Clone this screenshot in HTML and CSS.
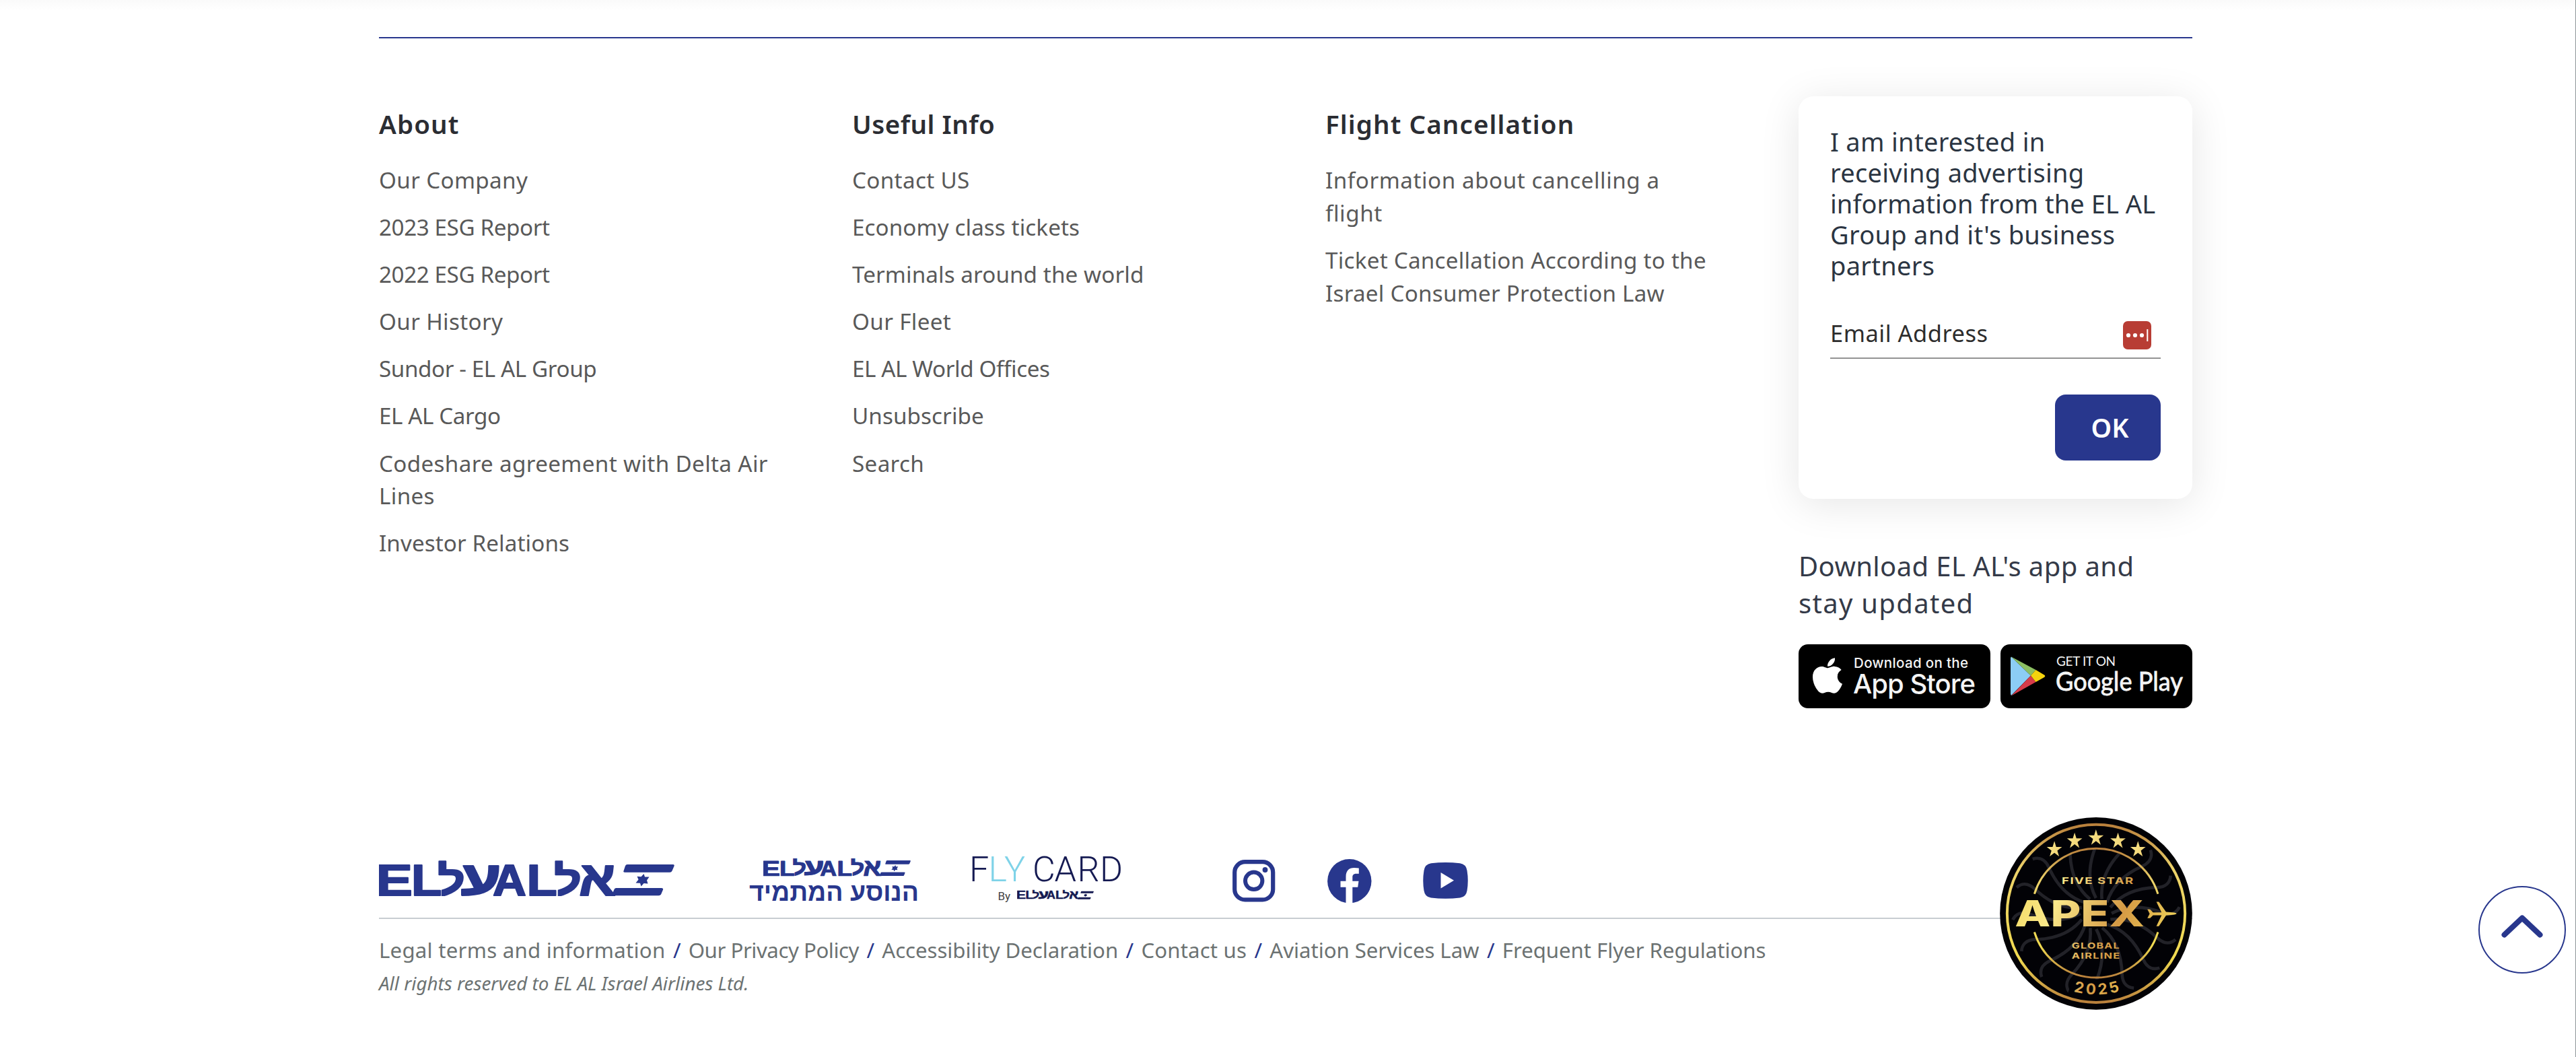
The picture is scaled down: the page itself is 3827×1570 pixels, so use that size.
FILE: index.html
```html
<!DOCTYPE html>
<html lang="en">
<head>
<meta charset="utf-8">
<title>EL AL</title>
<link rel="stylesheet" href="styles.css">
</head>
<body>
<svg class="defs" aria-hidden="true">
  <symbol id="elal" viewBox="0 0 439 53">
    <g class="wordmark">
      <text transform="matrix(.825 0 0 .645 -5 51.5)">E</text>
      <text transform="matrix(.74 0 0 .645 48 51.5)">L</text>
      <text transform="matrix(.72 0 0 .615 87 50.5)">ל</text>
      <text transform="matrix(.98 0 0 .7 121.5 49.5)">ע</text>
      <text transform="matrix(.69 0 0 .64 169 51.5)">A</text>
      <text transform="matrix(.74 0 0 .645 219.5 51.5)">L</text>
      <text transform="matrix(.72 0 0 .615 260 50.5)">ל</text>
      <text transform="matrix(.8 0 0 .73 297 51.5)">א</text>
    </g>
    <path d="M369 6H436.500Q439.500 6 438.500 8.500L435.500 15.500Q434.500 17.700 432 17.700H365.500Q362.500 17.700 363.500 15.500L366 8Q366.800 6 369 6Z"/>
    <path d="M352.500 41H419.500Q422.800 41 422 43.500L419 50.500Q418 52.300 415.500 52.300H348.500Q346 52.300 346.800 49.500L349.500 43Q350.300 41 352.500 41Z"/>
    <path d="M393.500 20L395 24.500L401.500 24.500L398 29.500L399.500 34.500L393.500 34L389.500 38.500L388 33.800L381.500 33.500L385.500 28.500L383.500 23.800L389.500 24.300Z"/>
  </symbol>
</svg>

<footer class="footer">
  <div class="top">
    <nav class="col">
      <h2>About</h2>
      <ul>
        <li><a>Our Company</a></li>
        <li><a class="snug">2023 ESG Report</a></li>
        <li><a class="snug">2022 ESG Report</a></li>
        <li><a>Our History</a></li>
        <li><a class="snug">Sundor - EL AL Group</a></li>
        <li><a class="snug">EL AL Cargo</a></li>
        <li><a>Codeshare agreement with Delta Air<br>Lines</a></li>
        <li><a class="even">Investor Relations</a></li>
      </ul>
    </nav>
    <nav class="col">
      <h2 class="tight">Useful Info</h2>
      <ul>
        <li><a>Contact US</a></li>
        <li><a class="even">Economy class tickets</a></li>
        <li><a class="even">Terminals around the world</a></li>
        <li><a>Our Fleet</a></li>
        <li><a class="snug">EL AL World Offices</a></li>
        <li><a class="even">Unsubscribe</a></li>
        <li><a>Search</a></li>
      </ul>
    </nav>
    <nav class="col">
      <h2>Flight Cancellation</h2>
      <ul>
        <li><a class="wide">Information about cancelling a<br>flight</a></li>
        <li><a class="mid">Ticket Cancellation According to the<br>Israel Consumer Protection Law</a></li>
      </ul>
    </nav>
    <aside class="side">
      <div class="card">
        <p>I am interested in<br>receiving advertising<br><span class="snug">information from the EL AL</span><br>Group and it's business<br>partners</p>
        <div class="field">
          <span>Email Address</span>
          <svg width="42" height="42" viewBox="0 0 42 42"><rect width="42" height="42" rx="7" fill="#b83d34"/><g fill="#fff"><circle cx="8" cy="21" r="3.100"/><circle cx="18" cy="21" r="3.100"/><circle cx="28" cy="21" r="3.100"/><rect x="35.300" y="12" width="2" height="18"/></g></svg>
        </div>
        <button>OK</button>
      </div>
      <p class="app">Download EL AL's app and<br><span class="wide">stay updated</span></p>
      <div class="stores">
        <svg width="285" height="95" viewBox="0 0 285 95">
          <rect width="285" height="95" rx="14"/>
          <path fill="#fff" transform="translate(20.500 16.600) scale(.117)" d="M318.700 268.700c-.2-36.700 16.400-64.400 50-84.800-18.800-26.900-47.200-41.700-84.700-44.600-35.500-2.800-74.300 20.700-88.500 20.700-15 0-49.400-19.700-76.400-19.700C63.300 141.200 4 184.800 4 273.500q0 39.300 14.400 81.200c12.800 36.700 59 126.700 107.200 125.200 25.200-.6 43-17.900 75.800-17.900 31.800 0 48.300 17.900 76.400 17.900 48.600-.7 90.400-82.500 102.600-119.300-65.200-30.700-61.700-90-61.700-91.900zm-56.600-164.200c27.300-32.400 24.800-61.900 24-72.500-24.100 1.400-52 16.400-67.900 34.900-17.500 19.800-27.800 44.300-25.600 71.900 26.100 2 49.900-11.400 69.500-34.300z"/>
          <text class="st-small" x="82" y="35" textLength="170">Download on the</text>
          <text class="st-big" x="81" y="72.500" textLength="182">App Store</text>
        </svg>
        <svg width="285" height="95" viewBox="0 0 285 95">
          <rect width="285" height="95" rx="14"/>
          <path fill="#8ccdf5" d="M15 20L16 18.500L45 46.500L16 76L15 74Z"/>
          <path fill="#8cbf62" d="M16 18.500L52.500 38L45 46.500Z"/>
          <path fill="#d63c4a" d="M16 76.500L45 46.500L52.500 56Z"/>
          <path fill="#f5d30d" d="M52.500 38L65 45.500Q67.500 47 65 49L52.500 56L45 46.500Z"/>
          <text class="gp-small" x="83" y="32" textLength="88">GET IT ON</text>
          <text class="gp-big" x="82" y="69" textLength="189" lengthAdjust="spacingAndGlyphs">Google Play</text>
        </svg>
      </div>
    </aside>
  </div>

  <div class="bottom">
    <div class="brands">
      <svg class="logo-main" width="439" height="53"><use href="#elal"/></svg>
      <svg class="logo-club" width="254" height="72" viewBox="0 0 254 72">
        <use href="#elal" x="21" y="0" width="219" height="26.500"/>
        <text x="0" y="63" textLength="252" lengthAdjust="spacingAndGlyphs">הנוסע המתמיד</text>
      </svg>
      <svg class="logo-fly" width="221" height="72" viewBox="0 0 221 72">
        <text class="fly" x="-4 24.500 48 90 122.500 156.500 190" y="37">F<tspan fill="#7fd3e8">LY</tspan>CARD</text>
        <text class="by" x="38.500" y="64.500">By</text>
        <use href="#elal" x="67" y="49" width="114" height="16"/>
      </svg>
      <svg class="social ig" width="64" height="63" viewBox="0 0 64 63">
        <rect x="3.200" y="3.200" width="57" height="56.200" rx="15.500" fill="none" stroke="currentColor" stroke-width="6.200"/>
        <circle cx="31.700" cy="31.300" r="12.700" fill="none" stroke="currentColor" stroke-width="6"/>
        <circle cx="48.500" cy="15" r="3.900" fill="currentColor"/>
      </svg>
      <svg class="social fb" width="66" height="65" viewBox="0 0 66 65">
        <circle cx="32.800" cy="32.700" r="32.700" fill="currentColor"/>
        <path fill="#fff" d="M27.500 66V41.700H19.500V32.700H27.500V26C27.500 17.500 32 13 39.800 13C42.500 13 44.800 13.200 46.800 13.600V21.700H42.800C38.800 21.700 37.300 23.900 37.300 26.700V32.700H46.500L45.200 41.700H37.300V66Z"/>
      </svg>
      <svg class="social yt" width="67" height="54" viewBox="0 0 67 54">
        <path fill="currentColor" d="M12 1.200Q33.500-1 55 1.200Q64 2.500 65.500 12Q68 27 65.500 42Q64 51.500 55 52.500Q33.500 55 12 52.500Q3 51.500 1.500 42Q-1 27 1.500 12Q3 2.500 12 1.200Z"/>
        <path fill="#fff" d="M26.500 15L46 26.800L26.500 38.500Z"/>
      </svg>
    </div>
    <div class="legal">
      <a class="wide">Legal terms and information</a><i>/</i><a class="snug">Our Privacy Policy</a><i>/</i><a class="even">Accessibility Declaration</a><i>/</i><a>Contact us</a><i>/</i><a class="even">Aviation Services Law</a><i>/</i><a class="even">Frequent Flyer Regulations</a>
    </div>
    <p class="copy">All rights reserved to EL AL Israel Airlines Ltd.</p>

    <svg class="apex" width="286" height="286" viewBox="95 71 857 857">
      <defs>
        <linearGradient id="gold" gradientUnits="userSpaceOnUse" x1="140" y1="300" x2="900" y2="620">
          <stop offset="0" stop-color="#f0d558"/><stop offset=".3" stop-color="#fbe98a"/><stop offset=".65" stop-color="#d59a45"/><stop offset="1" stop-color="#f3dc5c"/>
        </linearGradient>
        <linearGradient id="ring" x1="0" y1="0" x2="0" y2="1">
          <stop offset="0" stop-color="#b9803c"/><stop offset=".25" stop-color="#ecd26a"/><stop offset=".75" stop-color="#f0da50"/><stop offset="1" stop-color="#b9803c"/>
        </linearGradient>
        <path id="ray" d="M523 430C480 350 495 270 520 205C535 165 520 140 495 128"/>
        <path id="yearArc" d="M162.500 499A361 361 0 0 0 884.500 499"/>
      </defs>
      <circle cx="523.500" cy="499" r="428" fill="#020206"/>
      <g fill="none" stroke="#222228" stroke-width="14">
        <use href="#ray"/><use href="#ray" transform="rotate(22.500 523.500 499)"/><use href="#ray" transform="rotate(45 523.500 499)"/><use href="#ray" transform="rotate(67.500 523.500 499)"/><use href="#ray" transform="rotate(90 523.500 499)"/><use href="#ray" transform="rotate(112.500 523.500 499)"/><use href="#ray" transform="rotate(135 523.500 499)"/><use href="#ray" transform="rotate(157.500 523.500 499)"/><use href="#ray" transform="rotate(180 523.500 499)"/><use href="#ray" transform="rotate(202.500 523.500 499)"/><use href="#ray" transform="rotate(225 523.500 499)"/><use href="#ray" transform="rotate(247.500 523.500 499)"/><use href="#ray" transform="rotate(270 523.500 499)"/><use href="#ray" transform="rotate(292.500 523.500 499)"/><use href="#ray" transform="rotate(315 523.500 499)"/><use href="#ray" transform="rotate(337.500 523.500 499)"/>
      </g>
      <path d="M304.500 239A340 340 0 0 1 742.500 239M410 820A340 340 0 0 0 637 820" fill="none" stroke="#020206" stroke-width="96"/>
      <circle cx="523.500" cy="499" r="396" fill="none" stroke="url(#ring)" stroke-width="12"/>
      <path d="M249 412A288 288 0 0 1 799 412M249 582A288 288 0 0 0 799 582" fill="none" stroke="url(#ring)" stroke-width="9"/>
      <g fill="url(#gold)">
        <path id="star" d="M523 125L531 151L557 151L536 167L544 193L523 177L502 193L510 167L489 151L515 151Z"/>
        <use href="#star" x="-95" y="14"/><use href="#star" x="98" y="14"/><use href="#star" x="-185" y="52"/><use href="#star" x="187" y="52"/>
        <text class="ax b7" x="371" y="368" font-size="41" textLength="322" lengthAdjust="spacingAndGlyphs">FIVE STAR</text>
        <text class="ax b8" x="162" y="557" font-size="160" textLength="577" lengthAdjust="spacingAndGlyphs">APEX</text>
        <text class="ax b7" x="415" y="655" font-size="37" textLength="216" lengthAdjust="spacingAndGlyphs">GLOBAL</text>
        <text class="ax b7" x="415" y="699" font-size="37" textLength="218" lengthAdjust="spacingAndGlyphs">AIRLINE</text>
        <text class="ax b7 year" font-size="67" text-anchor="middle"><textPath href="#yearArc" startOffset="50.800%">2025</textPath></text>
        <path d="M752 480L764 481L777 494H815L792 447H803L835 492L872 495Q892 499 872 504L835 508L803 556H792L815 507H777L764 520H752L762 500Z"/>
      </g>
    </svg>
  </div>
</footer>

<button class="to-top" aria-label="Back to top">
  <svg width="64" height="40" viewBox="0 0 64 40"><path d="M5.500 32.500L32 7.500L58.500 32.500" fill="none" stroke="#28378d" stroke-width="8" stroke-linecap="round" stroke-linejoin="round"/></svg>
</button>
</body>
</html>
```
FILE: styles.css
```css
* { box-sizing: border-box; }

body {
  margin: 0;
  min-height: 1570px;
  position: relative;
  overflow: hidden;
  background: linear-gradient(#fafafa, #fff 16px) no-repeat #fff;
  border-right: 1px solid #8e9698;
  font-family: "Noto Sans", "Open Sans", sans-serif;
  color: #595959;
}

h2, p, ul { margin: 0; padding: 0; font-weight: 400; }
ul { list-style: none; }
.defs { display: none; }

.footer {
  width: 2694px;
  margin-left: 563px;
  padding-top: 55px;
}

.top {
  display: grid;
  grid-template-columns: 585px 585px 585px 585px;
  column-gap: 118px;
  border-top: 2px solid #28378d;
  padding-top: 86px;
}

.col { padding-top: 17px; white-space: nowrap; }
.col h2 {
  font-size: 38.5px;
  line-height: 48px;
  font-weight: 600;
  letter-spacing: 1.1px;
  color: #2b2d33;
  margin-bottom: 36px;
}
.col h2.tight { letter-spacing: .5px; }
.col ul { display: grid; gap: 21.4px; }
.col li {
  font-size: 33.2px;
  line-height: 48.7px;
  letter-spacing: .35px;
}
.col .snug { letter-spacing: -.4px; }
.col .even { letter-spacing: .1px; }
.col .mid { letter-spacing: .25px; }
.col .wide { letter-spacing: .55px; }

.card {
  height: 598px;
  padding: 44px 47px 0;
  border-radius: 22px;
  background: #fff;
  box-shadow: 0 8px 60px rgba(0, 0, 0, .1);
  display: flex;
  flex-direction: column;
}
.card p {
  font-size: 38px;
  line-height: 46px;
  letter-spacing: .3px;
  white-space: nowrap;
  color: #2b3542;
}
.card .snug { letter-spacing: .05px; }
.field {
  display: flex;
  justify-content: space-between;
  height: 63.4px;
  margin-top: 52.4px;
  padding-right: 14px;
  border-bottom: 2px solid #939393;
  font-size: 34.5px;
  line-height: 52px;
  letter-spacing: .5px;
  color: #2d2d2d;
}
.field svg { margin-top: 7.4px; }
.card button {
  align-self: flex-end;
  width: 157px;
  height: 98px;
  margin-top: 53px;
  padding: 0 0 0 6px;
  border: 0;
  border-radius: 16px;
  background: #28378d;
  color: #fff;
  font: 600 39px/98px "Noto Sans", sans-serif;
}

.app {
  margin-top: 72px;
  font-size: 40px;
  line-height: 55px;
  letter-spacing: .4px;
  white-space: nowrap;
  color: #343a48;
}
.app .wide { letter-spacing: 1.3px; }
.stores { display: flex; justify-content: space-between; margin-top: 34px; }
.stores text { fill: #f4f4f4; }
.st-small { font: 500 20.5px "Inter", sans-serif; }
.st-big { font: 500 40px "Inter", sans-serif; }
.gp-small { font: 400 19px "Lato", sans-serif; }
.gp-big { font: 400 39px "Lato", sans-serif; stroke: #f4f4f4; stroke-width: .8px; }

.bottom { position: relative; margin-top: 220px; }
.brands {
  display: flex;
  align-items: flex-start;
  height: 93px;
  border-bottom: 2px solid #c8cdd2;
  color: #28378d;
  fill: #28378d;
}
.brands svg { flex: none; overflow: visible; }
.wordmark text {
  font: 700 100px "Liberation Sans", sans-serif;
  stroke: currentColor;
  stroke-width: 3px;
  stroke-linejoin: round;
}
.logo-main { margin-top: 6px; }
.logo-club { margin: 3px 0 0 111px; }
.logo-club > text { font: 700 37.5px "Liberation Sans", sans-serif; }
.logo-fly { margin-left: 77px; fill: #151a52; color: #151a52; }
.fly { font: 300 52px "Roboto", sans-serif; }
.by { font: 400 17px "Roboto", sans-serif; fill: #444; }
.ig { margin: 4.5px 0 0 166px; }
.fb { margin: 4px 0 0 77px; }
.yt { margin: 9px 0 0 76px; }

.legal {
  display: flex;
  align-items: baseline;
  margin-top: 22.6px;
  font-size: 31.2px;
  line-height: 47px;
  letter-spacing: .15px;
  white-space: nowrap;
  color: #6c7272;
}
.legal i { font-style: normal; color: #28378d; margin: 0 11px 0 11.5px; }
.legal .wide { letter-spacing: .25px; }
.legal .snug { letter-spacing: -.45px; }
.legal .even { letter-spacing: -.05px; }
.copy {
  margin-top: 3px;
  font-size: 27.8px;
  line-height: 44px;
  font-style: italic;
  color: #6c7272;
}

.apex { position: absolute; right: 0; top: -58.5px; }
.ax { font-family: "Inter", sans-serif; }
.b7 { font-weight: 700; letter-spacing: .08em; }
.b8 { font-weight: 800; }
.year { letter-spacing: 12px; }

.to-top {
  position: absolute;
  left: 3682px;
  top: 1316px;
  width: 130px;
  height: 130px;
  padding: 0;
  border: 2px solid #28378d;
  border-radius: 50%;
  background: #fff;
  display: grid;
  place-items: center;
}
.to-top svg { margin-top: -10px; }
```
